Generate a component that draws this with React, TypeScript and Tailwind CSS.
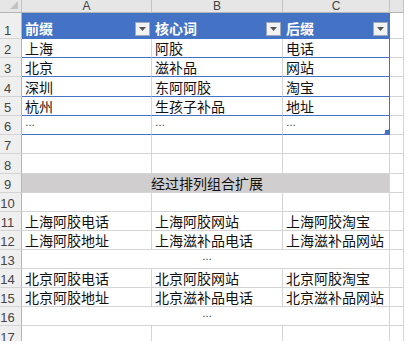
import React from 'react';

// --- Data ---

type RowKind = 'head' | 'table' | 'plain' | 'band' | 'merged';

type SheetRow = { n: number; kind: RowKind; cells?: string[]; text?: string };

const ROWS: SheetRow[] = [
  { n: 1, kind: 'head', cells: ['前缀', '核心词', '后缀'] },
  { n: 2, kind: 'table', cells: ['上海', '阿胶', '电话'] },
  { n: 3, kind: 'table', cells: ['北京', '滋补品', '网站'] },
  { n: 4, kind: 'table', cells: ['深圳', '东阿阿胶', '淘宝'] },
  { n: 5, kind: 'table', cells: ['杭州', '生孩子补品', '地址'] },
  { n: 6, kind: 'table', cells: ['…', '…', '…'] },
  { n: 7, kind: 'plain', cells: ['', '', ''] },
  { n: 8, kind: 'plain', cells: ['', '', ''] },
  { n: 9, kind: 'band', text: '经过排列组合扩展' },
  { n: 10, kind: 'plain', cells: ['', '', ''] },
  { n: 11, kind: 'plain', cells: ['上海阿胶电话', '上海阿胶网站', '上海阿胶淘宝'] },
  { n: 12, kind: 'plain', cells: ['上海阿胶地址', '上海滋补品电话', '上海滋补品网站'] },
  { n: 13, kind: 'merged', text: '…' },
  { n: 14, kind: 'plain', cells: ['北京阿胶电话', '北京阿胶网站', '北京阿胶淘宝'] },
  { n: 15, kind: 'plain', cells: ['北京阿胶地址', '北京滋补品电话', '北京滋补品网站'] },
  { n: 16, kind: 'merged', text: '…' },
  { n: 17, kind: 'plain', cells: ['', '', ''] },
];

const LATIN = "font-[family-name:'Liberation_Sans',Arial,sans-serif]";
const TXT = 'flex items-end overflow-hidden whitespace-nowrap pl-[3px] pb-[2px] text-[14px] leading-[14px] text-[#111]';
const GRID = 'border-r border-b border-[#d4d4d4]';

// --- Pieces ---

const Ellipsis = () => (
  <span className={`${LATIN} text-[10px] leading-[10px] pb-[4px] text-[#222]`}>…</span>
);

const CellText = ({ value }: { value: string }) =>
  value === '…' ? <Ellipsis /> : <span>{value}</span>;

const FilterButton = () => (
  <div className="w-[15px] h-[14px] mb-[-1px] flex items-center justify-center border border-[#9fa8b8] bg-[#f2f2f2]">
    <svg width="7" height="4" viewBox="0 0 7 4">
      <polygon points="0,0 7,0 3.5,4" fill="#555" />
    </svg>
  </div>
);

const RowHeader = ({ n }: { n: number }) => (
  <div className={`${LATIN} flex items-end justify-center pr-[6px] pb-[1px] bg-[#efefef] border-r border-b border-r-[#b5b5b5] border-b-[#d4d4d4] text-[13px] leading-[13px] text-[#444]`}>
    {n}
  </div>
);

const ColHeader = ({ label }: { label: string }) => (
  <div className={`${LATIN} flex items-end justify-center bg-[#e6e6e6] border-r border-b border-r-[#c4c4c4] border-b-[#b5b5b5] text-[12px] leading-[12px] text-[#444]`}>
    {label}
  </div>
);

const SheetRowView = ({ row }: { row: SheetRow }) => {
  const { kind } = row;

  if (kind === 'head') {
    return (
      <>
        <RowHeader n={row.n} />
        {row.cells!.map((c) => (
          <div key={c} className="flex items-end justify-between pl-[3px] pr-[2px] pb-[3px] bg-[#4472c4] border-b border-[#4472c4] text-[14px] leading-[14px] font-bold text-white">
            <span>{c}</span>
            <FilterButton />
          </div>
        ))}
        <div className={GRID} />
      </>
    );
  }

  if (kind === 'table') {
    return (
      <>
        <RowHeader n={row.n} />
        <div className={`${TXT} border-r border-b border-r-[#d4d4d4] border-b-[#4472c4]`}>
          <CellText value={row.cells![0]} />
        </div>
        <div className={`${TXT} border-r border-b border-r-[#d4d4d4] border-b-[#4472c4]`}>
          <CellText value={row.cells![1]} />
        </div>
        <div className={`${TXT} relative border-r border-b border-[#4472c4]`}>
          <CellText value={row.cells![2]} />
          {row.n === 6 && (
            <svg className="absolute right-0 bottom-0" width="5" height="5" viewBox="0 0 5 5">
              <polygon points="5,0 5,5 0,5" fill="#4472c4" />
              <rect x="1" y="1" width="4" height="4" fill="#4472c4" />
            </svg>
          )}
        </div>
        <div className={GRID} />
      </>
    );
  }

  if (kind === 'band' || kind === 'merged') {
    return (
      <>
        <RowHeader n={row.n} />
        <div className={`${TXT} col-span-3 justify-center pl-0 ${GRID} ${kind === 'band' ? 'bg-[#d0cece]' : ''}`}>
          <CellText value={row.text!} />
        </div>
        <div className={GRID} />
      </>
    );
  }

  return (
    <>
      <RowHeader n={row.n} />
      {row.cells!.map((c, i) => (
        <div key={i} className={`${TXT} ${GRID}`}>
          <CellText value={c} />
        </div>
      ))}
      <div className={GRID} />
    </>
  );
};

export default function App() {
  return (
    <div className="w-[409px] h-[348px] bg-white overflow-hidden font-[family-name:'Noto_Sans_CJK_SC','Liberation_Sans',sans-serif]">
      <div className="w-[404px] h-[341px] overflow-hidden">
        <div className="grid grid-cols-[22px_130px_131px_107px_14px] grid-rows-[13px_26px_19px_19px_20px_19px_19px_19px_20px_19px_19px_19px_19px_19px_19px_19px_19px_20px]">
          {/* corner + column letters */}
          <div className="flex items-end justify-end pr-[3px] pb-[3px] bg-[#e6e6e6] border-r border-b border-r-[#c4c4c4] border-b-[#b5b5b5]">
            <svg width="8" height="8" viewBox="0 0 8 8">
              <polygon points="8,0 8,8 0,8" fill="#c3c3c3" />
            </svg>
          </div>
          <ColHeader label="A" />
          <ColHeader label="B" />
          <ColHeader label="C" />
          <ColHeader label="" />

          {ROWS.map((r) => (
            <SheetRowView key={r.n} row={r} />
          ))}
        </div>
      </div>
    </div>
  );
}
